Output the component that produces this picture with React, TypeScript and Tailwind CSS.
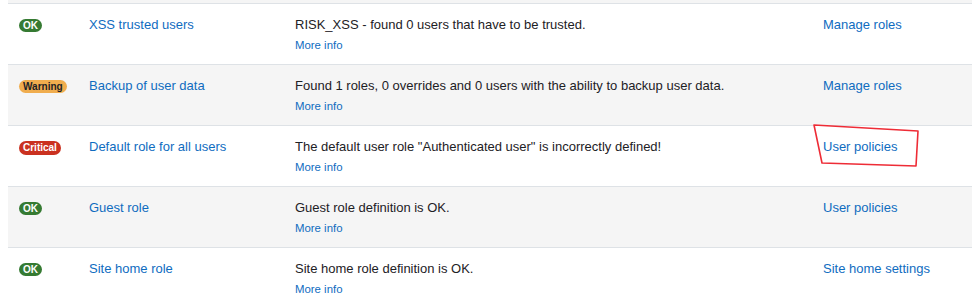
const ROWS = [
  {
    status: 'OK',
    name: 'XSS trusted users',
    desc: 'RISK_XSS - found 0 users that have to be trusted.',
    action: 'Manage roles',
  },
  {
    status: 'Warning',
    name: 'Backup of user data',
    desc: 'Found 1 roles, 0 overrides and 0 users with the ability to backup user data.',
    action: 'Manage roles',
  },
  {
    status: 'Critical',
    name: 'Default role for all users',
    desc: 'The default user role "Authenticated user" is incorrectly defined!',
    action: 'User policies',
  },
  {
    status: 'OK',
    name: 'Guest role',
    desc: 'Guest role definition is OK.',
    action: 'User policies',
  },
  {
    status: 'OK',
    name: 'Site home role',
    desc: 'Site home role definition is OK.',
    action: 'Site home settings',
  },
];

function Badge({ status }: { status: string }) {
  if (status === 'Warning') {
    return (
      <span className="inline-block rounded-full bg-[#f0ad4e] px-[4px] text-[10px] font-bold leading-[13px] text-[#1d2125]">
        Warning
      </span>
    );
  }
  if (status === 'Critical') {
    return (
      <span className="inline-block rounded-full bg-[#ca3120] px-[4px] text-[10px] font-bold leading-[14px] text-white">
        Critical
      </span>
    );
  }
  return (
    <span className="inline-block rounded-full bg-[#357a32] px-[4px] text-[10px] font-bold leading-[13px] text-white">
      OK
    </span>
  );
}

export default function App() {
  return (
    <div className="relative h-[294px] w-[979px] overflow-hidden bg-white font-['Liberation_Sans',Arial,sans-serif] text-[13px] text-[#1d2125]">
      <div className="ml-[8px] w-[964px]">
        <div className="h-[3px] bg-[#f5f5f5]" />
        <table className="w-full table-fixed border-collapse">
          <colgroup>
            <col className="w-[69px]" />
            <col className="w-[206px]" />
            <col className="w-[528px]" />
            <col className="w-[161px]" />
          </colgroup>
          <tbody>
            {ROWS.map((row, idx) => (
              <tr
                key={row.name}
                className={idx % 2 === 1 ? 'border-t border-[#dee2e6] bg-[#f5f5f5]' : 'border-t border-[#dee2e6]'}
              >
                <td className="h-[61px] pl-[11px] pt-[11px] align-top">
                  <Badge status={row.status} />
                </td>
                <td className="pl-[12px] pt-[11px] align-top leading-[20px]">
                  <a className="text-[#0f6cbf]">{row.name}</a>
                </td>
                <td className="pl-[12px] pt-[11px] align-top leading-[20px]">
                  <div>{row.desc}</div>
                  <a className="block text-[11.4px] leading-[20px] text-[#0f6cbf]">More info</a>
                </td>
                <td className="pl-[12px] pt-[11px] align-top leading-[20px]">
                  <a className="text-[#0f6cbf]">{row.action}</a>
                </td>
              </tr>
            ))}
          </tbody>
        </table>
      </div>

      <svg className="pointer-events-none absolute left-0 top-0" width="979" height="294">
        <polygon
          points="814,125 918,131 916,166 822,163"
          fill="none"
          stroke="#ee2c36"
          strokeWidth="1.6"
          strokeLinejoin="round"
        />
      </svg>
    </div>
  );
}
